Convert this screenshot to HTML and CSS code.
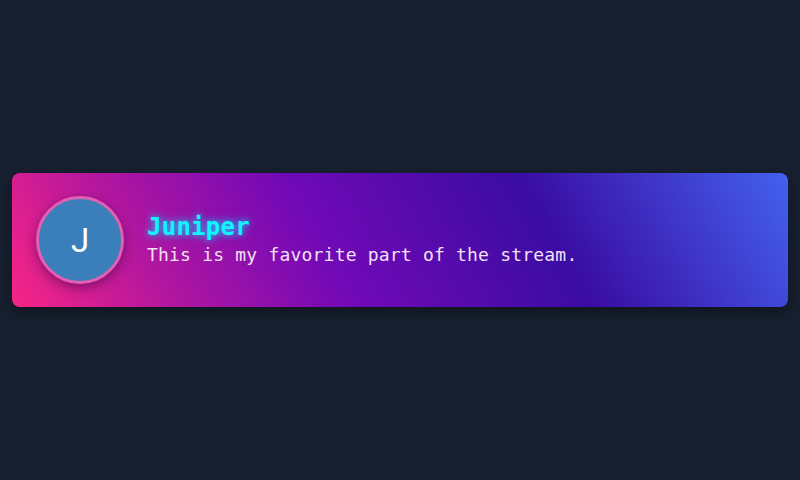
FILE: index.html
```html
<!DOCTYPE html>
<html lang="en">
<head>
<meta charset="utf-8">
<title>Chat message</title>
<link rel="stylesheet" href="styles.css">
</head>
<body>
<main class="stage">
  <article class="card">
    <div class="avatar">J</div>
    <div class="content">
      <div class="name">Juniper</div>
      <div class="message">This is my favorite part of the stream.</div>
    </div>
  </article>
</main>
</body>
</html>
```
FILE: styles.css
```css
html, body {
  margin: 0;
  padding: 0;
  height: 100%;
  background: #172030;
}
.stage {
  height: 100%;
  box-sizing: border-box;
  padding: 0 12px;
  display: flex;
  align-items: center;
}
.card {
  flex: 1;
  display: flex;
  align-items: center;
  gap: 23px;
  padding: 23px 24px;
  border-radius: 8px;
  background: linear-gradient(60deg, #f72585 0%, #b5179e 18%, #7209b7 40%, #3a0ca3 68%, #4361ee 100%);
  box-shadow: 0 6px 16px rgba(0, 0, 0, 0.35);
}
.avatar {
  width: 82px;
  height: 82px;
  flex: none;
  border-radius: 50%;
  border: 3px solid #e061b4;
  background: #3a7fba;
  color: #ffffff;
  font-family: "Roboto", "Liberation Sans", sans-serif;
  font-size: 33px;
  display: flex;
  align-items: center;
  justify-content: center;
  box-shadow: 0 4px 12px rgba(40, 0, 60, 0.45);
}
.content {
  display: flex;
  flex-direction: column;
  font-family: "DejaVu Sans Mono", "Liberation Mono", monospace;
}
.name {
  font-size: 24px;
  font-weight: bold;
  line-height: 1.2;
  color: #12f2ff;
  text-shadow: 0 0 6px rgba(0, 230, 255, 0.8), 0 0 12px rgba(0, 200, 255, 0.5);
  letter-spacing: 0.25px;
}
.message {
  font-size: 18px;
  line-height: 1.4;
  color: #f4e0f4;
  letter-spacing: 0.2px;
}
```
